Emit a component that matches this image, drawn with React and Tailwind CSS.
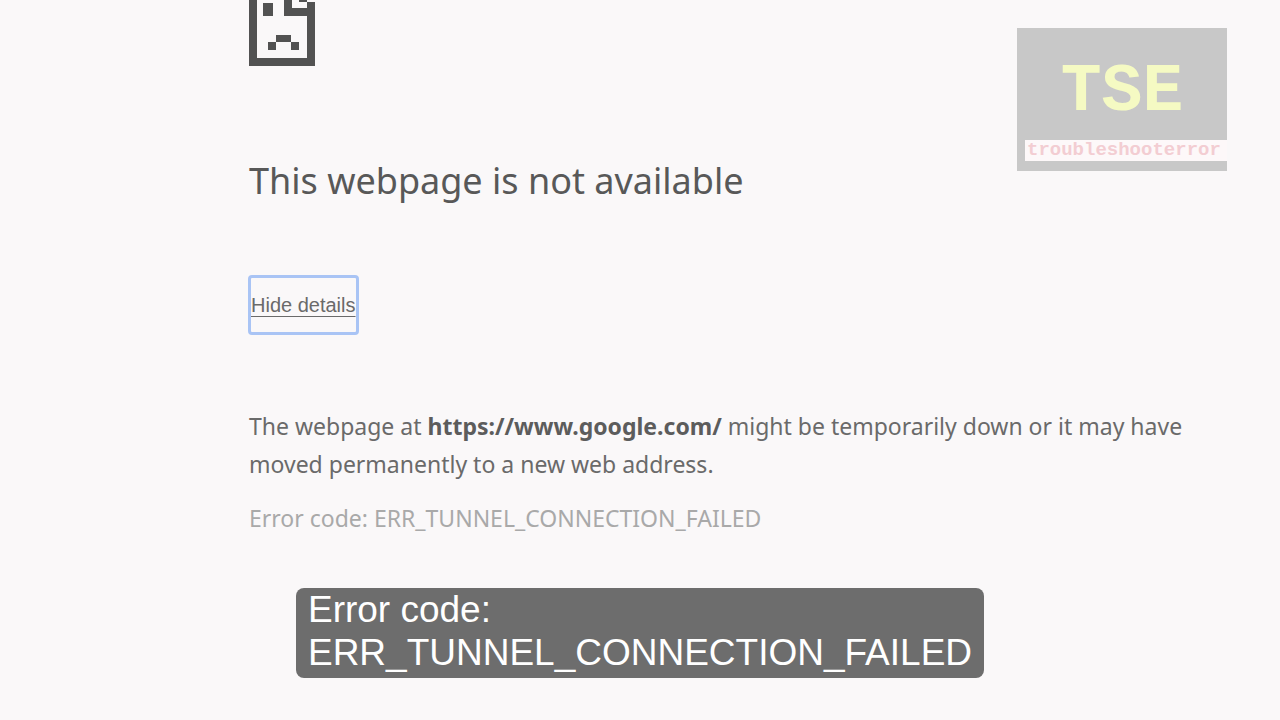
import { useState } from "react";

const ERROR_CODE = "ERR_TUNNEL_CONNECTION_FAILED";

function SadPageIcon() {
  return (
    <svg
      aria-hidden="true"
      className="block h-[66px] w-[66px] text-[#525252]"
      fill="currentColor"
      shapeRendering="crispEdges"
      viewBox="0 0 198 198"
    >
      <path d="M0 0h24v174h150V48h-69V0h24v25h45V6h-24V0h24v6h24v192H0z" />
      <path d="M42 10h30v38H42z" />
      <path d="M81 105h45v22h24v23h-24v-23H81v23H57v-23h24z" />
    </svg>
  );
}

function Watermark() {
  return (
    <aside className="absolute right-[53px] top-7 w-[210px] bg-[#c8c8c8] pb-2.5 pt-7 font-['Liberation_Mono',monospace] font-bold">
      <p className="text-center text-[68px] leading-[72px] text-[#f5fac3]">TSE</p>
      <p className="ml-2 mt-3 bg-[#fdf8f9] px-0.5 text-[19px] leading-[21px] text-[#f3cdd2]">
        troubleshooterror
      </p>
    </aside>
  );
}

function Caption() {
  return (
    <div className="absolute inset-x-0 bottom-[42px] flex justify-center">
      <p className="rounded-lg bg-[#6d6d6d] px-3 pb-1 font-['Liberation_Sans',Arial,sans-serif] text-[37px] leading-[43px] text-white">
        Error code:
        <br />
        {ERROR_CODE}
      </p>
    </div>
  );
}

export default function App() {
  const [showDetails, setShowDetails] = useState(true);

  return (
    <div className="relative min-h-screen overflow-hidden bg-[#faf8f9] font-['Noto_Sans','Open_Sans',sans-serif] text-[#6a6a6a]">
      <main className="ml-[249px] mr-20">
        <SadPageIcon />
        <h1 className="mt-[89px] text-[36px] leading-[52px] text-[#585858]">
          This webpage is not available
        </h1>

        <button
          aria-expanded={showDetails}
          className="-ml-px mt-[68px] block h-[60px] rounded-sm border-3 border-[#a9c4f5] font-['Liberation_Sans',Arial,sans-serif] text-[20px] underline decoration-1 underline-offset-4"
          onClick={() => setShowDetails(!showDetails)}
          type="button"
        >
          {showDetails ? "Hide details" : "Show details"}
        </button>

        {showDetails && (
          <div className="mt-[72px] text-[23px] leading-[38px]">
            <p>
              The webpage at <strong className="text-[#5c5c5c]">https://www.google.com/</strong> might
              be temporarily down or it may have moved permanently to a new web address.
            </p>
            <p className="mt-4 text-[#a9a9a9]">Error code: {ERROR_CODE}</p>
          </div>
        )}
      </main>

      <Watermark />
      <Caption />
    </div>
  );
}
